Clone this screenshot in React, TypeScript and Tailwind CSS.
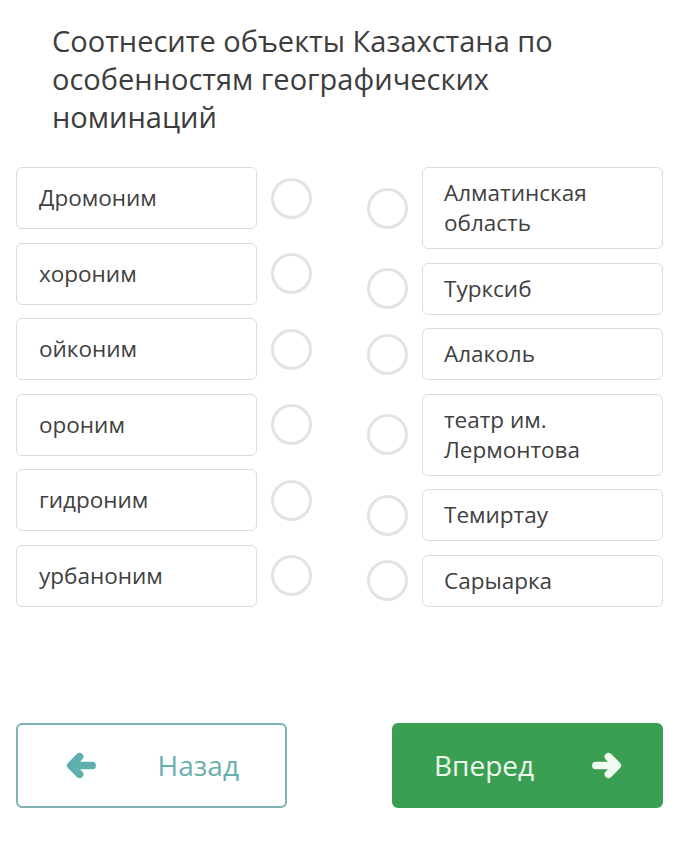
const LEFT = ["Дромоним", "хороним", "ойконим", "ороним", "гидроним", "урбаноним"];
const RIGHT = ["Алматинская область", "Турксиб", "Алаколь", "театр им. Лермонтова", "Темиртау", "Сарыарка"];

function Radio() {
  return <span className="block h-[41px] w-[41px] shrink-0 rounded-full border-[3px] border-[#e3e3e3] bg-white" />;
}

// chunky arrow, points left; flip for right
function Arrow({ right, className }: { right?: boolean; className?: string }) {
  return (
    <svg
      viewBox="0 0 32 28"
      width={31}
      height={27}
      className={className}
      style={right ? { transform: "scaleX(-1)" } : undefined}
    >
      <path
        d="M28 14H7M15 5L6 14L15 23"
        fill="none"
        stroke="currentColor"
        strokeWidth={8}
        strokeLinecap="round"
        strokeLinejoin="round"
      />
    </svg>
  );
}

export default function App() {
  return (
    <div className="min-h-[843px] w-[682px] bg-white font-['Open_Sans',sans-serif] text-[#3b3b3b]">
      <h1 className="w-[580px] pl-[52px] pt-[22px] text-[29px] font-normal leading-[38px] text-[#3d3d3d]">
        Соотнесите объекты Казахстана по особенностям географических номинаций
      </h1>

      <div className="mt-[31px] flex justify-between pl-[16px] pr-[19px]">
        {/* Left column */}
        <div className="flex flex-col gap-[13.5px]">
          {LEFT.map((t) => (
            <div key={t} className="flex items-center gap-[14px]">
              <div className="flex h-[62px] w-[241px] items-center rounded-[6px] border border-[#dcdcdc] px-[22px] text-[22.5px] text-[#404040]">
                {t}
              </div>
              <Radio />
            </div>
          ))}
        </div>

        {/* Right column */}
        <div className="flex flex-col gap-[13.5px]">
          {RIGHT.map((t) => (
            <div key={t} className="flex items-center gap-[14px]">
              <Radio />
              <div className="w-[241px] rounded-[6px] border border-[#dcdcdc] px-[21px] py-[10px] text-[22.5px] leading-[30px] text-[#404040]">
                {t}
              </div>
            </div>
          ))}
        </div>
      </div>

      <div className="mt-[116px] flex justify-between pl-[16px] pr-[19px]">
        <button className="flex h-[85px] w-[271px] items-center justify-between rounded-[6px] border-2 border-[#7fb4b6] bg-white pl-[47px] pr-[46px] text-[28px] text-[#6aaeae]">
          <Arrow className="text-[#5fb0ad]" />
          <span>Назад</span>
        </button>
        <button className="flex h-[85px] w-[271px] items-center justify-between rounded-[6px] bg-[#3a9f52] pl-[42px] pr-[40px] text-[28px] text-[#eef9ee]">
          <span>Вперед</span>
          <Arrow right className="text-[#f2fbf2]" />
        </button>
      </div>
    </div>
  );
}
